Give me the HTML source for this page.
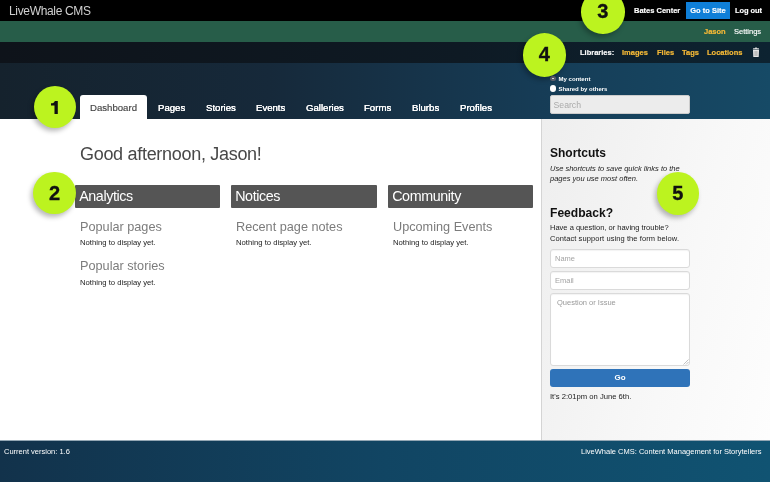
<!DOCTYPE html>
<html>
<head>
<meta charset="utf-8">
<title>LiveWhale CMS</title>
<style>
*{box-sizing:border-box;margin:0;padding:0}
html,body{width:770px;height:482px;overflow:hidden;background:#fff}
body{font-family:"Liberation Sans",sans-serif;position:relative;color:#222;filter:blur(0.35px)}
.abs{position:absolute;white-space:nowrap}
#bar1{left:0;top:0;width:770px;height:21px;background:#000}
#bar2{left:0;top:21px;width:770px;height:21px;background:#275d49}
#bar3{left:0;top:42px;width:770px;height:21px;background:linear-gradient(90deg,#0e131a 0%,#0e1a24 60%,#0d2331 100%)}
#hdr{left:0;top:63px;width:770px;height:56px;background:linear-gradient(90deg,#15222d 0%,#16293a 35%,#163c56 70%,#164a66 100%)}
#main{left:0;top:119px;width:542px;height:321px;background:#fff}
#side{left:541px;top:119px;width:229px;height:321px;background:linear-gradient(105deg,#eeeeee 0%,#f2f2f2 25%,#f8f8f8 60%,#fdfdfd 100%);border-left:1px solid #d4d4d4}
#foot{left:0;top:441px;width:770px;height:41px;box-shadow:0 -1px 0 rgba(17,60,88,0.45);background:linear-gradient(90deg,#12324b 0%,#114563 50%,#105372 100%)}
.t8{font-size:7.5px;line-height:10px}
.w{color:#fff}
.t8.w{-webkit-text-stroke:0.15px #fff}
.b{font-weight:bold}
.o{color:#f5b936;-webkit-text-stroke:0.2px #f5b936}
#logo{left:9px;top:3px;font-size:12px;line-height:16px;color:#d0d0d0;letter-spacing:-0.34px}
.tab{top:95px;height:24px;font-size:9.6px;line-height:26px;color:#fff;text-shadow:0 0 0.5px #fff;-webkit-text-stroke:0.2px #fff}
#tab1{left:80px;width:67px;background:#fff;color:#444;text-align:center;border-radius:3px 3px 0 0;text-shadow:none;-webkit-text-stroke:0.15px #444}
.circ{width:43px;height:43px;border-radius:50%;background:#bcf31f;box-shadow:-2px 3px 5px rgba(0,0,0,0.28);font-size:20px;font-weight:bold;color:#111;text-align:center;line-height:42.8px;-webkit-text-stroke:0.35px #111}
.sec{top:185px;height:23px;width:145px;background:#555;color:#fff;font-size:14.3px;line-height:23px;padding-left:4.2px;letter-spacing:-0.4px;border-radius:1px}
.sub{font-size:12.7px;line-height:15px;color:#7c7c7c}
.nd{font-size:7.7px;line-height:9px;color:#222}
.inp{left:550px;width:140px;height:18.5px;background:#fff;border:1px solid #dadada;border-radius:3px;font-size:7.5px;line-height:17.5px;color:#a4a4a4;padding-left:4px;box-shadow:inset 0 1px 1px rgba(0,0,0,0.05)}
</style>
</head>
<body>
<div id="bar1" class="abs"></div>
<div id="bar2" class="abs"></div>
<div id="bar3" class="abs"></div>
<div id="hdr" class="abs"></div>
<div id="main" class="abs"></div>
<div id="side" class="abs"></div>
<div id="foot" class="abs"></div>

<div id="logo" class="abs">LiveWhale CMS</div>

<div class="abs t8 w b" style="left:634px;top:6px">Bates Center</div>
<div class="abs t8 w b" style="left:686px;top:2px;width:44px;height:17px;background:#0f7fd8;text-align:center;line-height:18px">Go to Site</div>
<div class="abs t8 w b" style="left:735px;top:6px;letter-spacing:-0.08px">Log out</div>

<div class="abs t8 o b" style="left:704px;top:27px">Jason</div>
<div class="abs t8 w" style="left:734px;top:27px">Settings</div>

<div class="abs t8 w b" style="left:580px;top:47.5px">Libraries:</div>
<div class="abs t8 o b" style="left:622px;top:47.5px">Images</div>
<div class="abs t8 o b" style="left:657px;top:47.5px">Files</div>
<div class="abs t8 o b" style="left:682px;top:47.5px">Tags</div>
<div class="abs t8 o b" style="left:707px;top:47.5px">Locations</div>
<svg class="abs" style="left:752px;top:47px" width="8" height="11" viewBox="0 0 8 11"><path d="M3.2 0.6h1.6v0.7h1.6c0.5 0 0.7 0.3 0.7 0.8v0.5H0.9V2.1c0-0.5 0.2-0.8 0.7-0.8h1.6z M1 3.1h6l-0.3 6.9h-5.4z" fill="#e6e6e6"/><path d="M3.1 4v5M4.9 4v5" stroke="#777" stroke-width="0.6"/></svg>

<div id="tab1" class="abs tab">Dashboard</div>
<div class="abs tab" style="left:158px">Pages</div>
<div class="abs tab" style="left:206px">Stories</div>
<div class="abs tab" style="left:256px">Events</div>
<div class="abs tab" style="left:306px">Galleries</div>
<div class="abs tab" style="left:364px">Forms</div>
<div class="abs tab" style="left:412px">Blurbs</div>
<div class="abs tab" style="left:460px">Profiles</div>

<div class="abs" style="left:550.3px;top:76px;width:5.4px;height:5.4px;border-radius:50%;background:#5f6270"></div>
<div class="abs" style="left:552.3px;top:78px;width:1.4px;height:1.4px;border-radius:50%;background:#fff"></div>
<div class="abs w b" style="left:558.5px;top:75px;font-size:6.05px;line-height:8px">My content</div>
<div class="abs" style="left:549.8px;top:85.4px;width:6.2px;height:6.2px;border-radius:50%;background:#fff"></div>
<div class="abs w b" style="left:558.4px;top:84px;font-size:6px;line-height:8px;transform:translateY(0.5px)">Shared by others</div>
<div class="abs" style="left:550px;top:95px;width:140px;height:18.5px;background:#ececec;border:1px solid #ccc;border-radius:2px;font-size:8.7px;line-height:17.5px;color:#aaa;padding-left:2.5px"><span style="display:inline-block;transform:translateY(0.5px)">Search</span></div>

<div class="abs" style="left:80px;top:143px;font-size:18px;line-height:22px;color:#484848;letter-spacing:-0.3px">Good afternoon, Jason!</div>

<div class="abs sec" style="left:75px">Analytics</div>
<div class="abs sec" style="left:231px;width:146px">Notices</div>
<div class="abs sec" style="left:388px">Community</div>

<div class="abs sub" style="left:80px;top:220.3px">Popular pages</div>
<div class="abs nd" style="left:80px;top:238px">Nothing to display yet.</div>
<div class="abs sub" style="left:80px;top:258.6px">Popular stories</div>
<div class="abs nd" style="left:80px;top:278px">Nothing to display yet.</div>
<div class="abs sub" style="left:236px;top:220.3px">Recent page notes</div>
<div class="abs nd" style="left:236px;top:238px">Nothing to display yet.</div>
<div class="abs sub" style="left:393px;top:220.3px">Upcoming Events</div>
<div class="abs nd" style="left:393px;top:238px">Nothing to display yet.</div>

<div class="abs b" style="left:550px;top:146px;font-size:12px;line-height:14px;color:#111">Shortcuts</div>
<div class="abs" style="left:550px;top:164px;font-size:7.5px;line-height:10px;font-style:italic;color:#222">Use shortcuts to save quick links to the<br>pages you use most often.</div>
<div class="abs b" style="left:550px;top:206px;font-size:12.1px;line-height:14px;color:#111">Feedback?</div>
<div class="abs" style="left:550px;top:222px;font-size:7.53px;line-height:11px;color:#222">Have a question, or having trouble?</div>
<div class="abs" style="left:550px;top:233px;font-size:7.5px;line-height:11px;color:#222;letter-spacing:0.085px">Contact support using the form below.</div>
<div class="abs inp" style="top:249px">Name</div>
<div class="abs inp" style="top:271px">Email</div>
<div class="abs inp" style="top:293px;height:72.5px;padding-left:6px;color:#999">Question or Issue</div>
<svg class="abs" style="left:683px;top:358.5px" width="6" height="6" viewBox="0 0 6 6"><path d="M5.5 0.5L0.5 5.5M5.5 3L3 5.5" stroke="#999" stroke-width="0.6" fill="none"/></svg>
<div class="abs w b" style="left:550px;top:369px;width:140px;height:18px;background:#2f73b9;border-radius:3px;text-align:center;font-size:8px;line-height:18px">Go</div>
<div class="abs" style="left:550px;top:392px;font-size:7.65px;line-height:10px;color:#222">It's 2:01pm on June 6th.</div>

<div class="abs w" style="left:4px;top:447px;font-size:7.5px;line-height:10px">Current version: 1.6</div>
<div class="abs w" style="right:8.5px;top:447px;font-size:7.5px;line-height:10px">LiveWhale CMS: Content Management for Storytellers</div>

<div class="abs circ" style="left:34.3px;top:86.2px;width:42px;height:42px;line-height:41.7px"><svg width="6.8" height="13.3" viewBox="0 0 7 14" preserveAspectRatio="none" style="display:inline-block;vertical-align:middle;margin-top:-0.6px;margin-left:-1.5px"><path d="M3.9 0h3.1v14h-3.4v-9.2h-3.6v-2.3c2.3-0.1 3.5-0.9 3.9-2.5z" fill="#111"/></svg></div>
<div class="abs circ" style="left:33.4px;top:171.9px;width:42.4px;height:42.4px;line-height:42.1px">2</div>
<div class="abs circ" style="left:581.0px;top:-9.8px;width:43.5px;height:43.5px;line-height:43.2px">3</div>
<div class="abs circ" style="left:522.8px;top:33.4px;width:43.2px;height:43.2px;line-height:42.9px">4</div>
<div class="abs circ" style="left:656.7px;top:172.3px;width:42.4px;height:42.4px;line-height:42.1px">5</div>
</body>
</html>
